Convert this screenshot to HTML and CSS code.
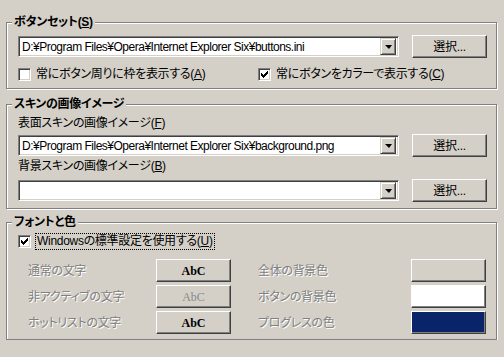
FILE: index.html
```html
<!DOCTYPE html>
<html lang="ja">
<head>
  <meta charset="UTF-8" />
  <title>スキン設定</title>
  <link rel="stylesheet" href="styles.css">
</head>
<body>
  <div class="dialog">
    <section class="group group-buttons">
      <span class="group-title">ボタンセット(<u>S</u>)</span>
      <div class="file-row first">
        <div class="combo">
          <span class="combo-text">D:¥Program Files¥Opera¥Internet Explorer Six¥buttons.ini</span>
          <span class="combo-arrow"><i></i></span>
        </div>
        <button class="btn">選択...</button>
      </div>
      <div class="check-row">
        <label class="check"><span class="box"></span><span>常にボタン周りに枠を表示する(<u>A</u>)</span></label>
        <label class="check"><span class="box"><svg width="11" height="11" viewBox="0 0 11 11"><path d="M2 4h1v3H2zM3 5h1v3H3zM4 6h1v3H4zM5 5h1v3H5zM6 4h1v3H6zM7 3h1v3H7zM8 2h1v3H8z"/></svg></span><span>常にボタンをカラーで表示する(<u>C</u>)</span></label>
      </div>
    </section>

    <section class="group group-skin">
      <span class="group-title">スキンの画像イメージ</span>
      <div class="field-label first">表面スキンの画像イメージ(<u>F</u>)</div>
      <div class="file-row">
        <div class="combo">
          <span class="combo-text">D:¥Program Files¥Opera¥Internet Explorer Six¥background.png</span>
          <span class="combo-arrow"><i></i></span>
        </div>
        <button class="btn">選択...</button>
      </div>
      <div class="field-label">背景スキンの画像イメージ(<u>B</u>)</div>
      <div class="file-row last">
        <div class="combo">
          <span class="combo-text"></span>
          <span class="combo-arrow"><i></i></span>
        </div>
        <button class="btn">選択...</button>
      </div>
    </section>

    <section class="group group-colors">
      <span class="group-title">フォントと色</span>
      <label class="check system"><span class="box"><svg width="11" height="11" viewBox="0 0 11 11"><path d="M2 4h1v3H2zM3 5h1v3H3zM4 6h1v3H4zM5 5h1v3H5zM6 4h1v3H6zM7 3h1v3H7zM8 2h1v3H8z"/></svg></span><span class="focus">Windowsの標準設定を使用する(<u>U</u>)</span></label>
      <div class="color-grid">
        <span class="dim">通常の文字</span>
        <button class="btn sample">AbC</button>
        <span class="dim right">全体の背景色</span>
        <span class="swatch swatch-face"></span>

        <span class="dim">非アクティブの文字</span>
        <button class="btn sample off">AbC</button>
        <span class="dim right">ボタンの背景色</span>
        <span class="swatch swatch-white"></span>

        <span class="dim">ホットリストの文字</span>
        <button class="btn sample">AbC</button>
        <span class="dim right">プログレスの色</span>
        <span class="swatch swatch-navy"></span>
      </div>
    </section>
  </div>
</body>
</html>
```

FILE: styles.css
```css
* {
  box-sizing: border-box;
}
body {
  margin: 0;
  background: #d4d0c8;
  color: #000;
  font-family: "Liberation Sans", "Noto Sans CJK JP", sans-serif;
  font-size: 12px;
  line-height: 14px;
  letter-spacing: -0.3px;
  font-feature-settings: "palt";
}
u {
  text-decoration: underline;
}
.dialog {
  padding: 22px 7px 0 6px;
}
.group {
  border: 1px solid #808080;
  box-shadow: inset 1px 1px 0 #fff, 1px 1px 0 #fff;
  padding: 0 0 0 11px;
}
.group-buttons {
  height: 67px;
}
.group-skin {
  height: 105px;
  margin-top: 15px;
}
.group-colors {
  height: 118px;
  margin-top: 13px;
}
.group-title {
  display: block;
  width: fit-content;
  margin: -8px 0 0 -6px;
  padding: 0 2px;
  background: #d4d0c8;
  font-weight: bold;
}

/* combo + button rows */
.file-row {
  display: flex;
  align-items: center;
  gap: 13px;
  height: 23px;
  margin-top: 4px;
}
.file-row.first {
  margin-top: 6px;
}
.file-row.last {
  margin-top: 6px;
}
.combo {
  width: 381px;
  height: 21px;
  display: flex;
  align-items: center;
  background: #fff;
  border: 1px solid;
  border-color: #808080 #fff #fff #808080;
  box-shadow: inset 1px 1px 0 #404040, inset -1px -1px 0 #d4d0c8;
  padding: 2px;
}
.combo-text {
  flex: 1;
  padding-left: 1px;
  white-space: nowrap;
  overflow: hidden;
  letter-spacing: -0.5px;
}
.combo-arrow {
  width: 16px;
  height: 17px;
  display: flex;
  align-items: center;
  justify-content: center;
  background: #d4d0c8;
  border: 1px solid;
  border-color: #d4d0c8 #404040 #404040 #d4d0c8;
  box-shadow: inset 1px 1px 0 #fff, inset -1px -1px 0 #808080;
}
.combo-arrow i {
  width: 0;
  height: 0;
  border-left: 4px solid transparent;
  border-right: 3px solid transparent;
  border-top: 4px solid #000;
}
.btn {
  width: 75px;
  height: 23px;
  padding: 0;
  background: #d4d0c8;
  border: 1px solid;
  border-color: #fff #404040 #404040 #fff;
  box-shadow: inset -1px -1px 0 #808080;
  font: inherit;
  letter-spacing: inherit;
  color: #000;
}

/* checkboxes */
.check-row {
  display: grid;
  grid-template-columns: 240px 1fr;
  margin-top: 9px;
}
.check {
  display: flex;
  align-items: center;
  gap: 5px;
  height: 14px;
}
.box {
  width: 13px;
  height: 13px;
  flex: none;
  background: #fff;
  border: 1px solid;
  border-color: #808080 #fff #fff #808080;
  box-shadow: inset 1px 1px 0 #404040, inset -1px -1px 0 #d4d0c8;
}
.box svg {
  display: block;
}
.check.system {
  margin-top: 5px;
  gap: 4px;
}
.focus {
  border: 1px dotted #000;
  padding: 0 1px;
  line-height: 15px;
}

.field-label {
  margin-top: 2px;
}
.field-label.first {
  margin-top: 5px;
}

/* colour grid */
.color-grid {
  display: grid;
  grid-template-columns: 138px 75px 180px 75px;
  grid-auto-rows: 23px;
  row-gap: 3px;
  margin-top: 11px;
  align-items: center;
}
.dim {
  padding-left: 10px;
  color: #808080;
  text-shadow: 1px 1px 0 #fff;
}
.dim.right {
  padding-left: 27px;
}
.sample {
  font-family: "Liberation Serif", serif;
  font-weight: bold;
  font-size: 12px;
  letter-spacing: 0;
}
.sample.off {
  color: #8a8a8a;
  font-weight: normal;
}
.swatch {
  height: 23px;
  border: 1px solid;
  border-color: #fff #404040 #404040 #fff;
  box-shadow: inset -1px -1px 0 #808080;
}
.swatch-face {
  background: #d4d0c8;
}
.swatch-white {
  background: #fff;
}
.swatch-navy {
  background: #0a246a;
}
```
